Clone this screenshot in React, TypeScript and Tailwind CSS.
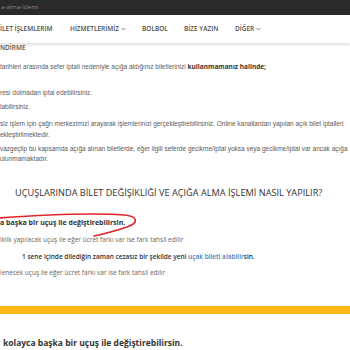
import React from "react";

function Chevron() {
	return (
		<svg width="5" height="4" viewBox="0 0 10 6" fill="none" className="ml-[2px]">
			<polyline points="1,1 5,5 9,1" stroke="#555" strokeWidth="1.4" />
		</svg>
	);
}

const navItems = [
	{ name: "İLET İŞLEMLERİM", width: "w-[70px]", menu: false },
	{ name: "HİZMETLERİMİZ", width: "w-[72px]", menu: true },
	{ name: "BOLBOL", width: "w-[42px]", menu: false },
	{ name: "BİZE YAZIN", width: "w-[51px]", menu: false },
	{ name: "DİĞER", width: "", menu: true },
];

export default function App() {
	return (
		<div className="relative h-[350px] w-[350px] overflow-hidden bg-white font-['Open_Sans',sans-serif]">
			<div className="h-[15px] bg-[#2a2a2a] pl-[1px] text-[6px] leading-[15px] text-[#8c8c8c]">a-alma-islemi</div>

			<nav className="relative z-10 flex h-[28px] items-center bg-white text-[6.5px] font-semibold text-[#4d4d4d] shadow-[0_2px_3px_rgba(0,0,0,0.12)]">
				{navItems.map((item) => (
					<span key={item.name} className={`flex items-center whitespace-nowrap ${item.width}`}>
						{item.name}
						{item.menu && <Chevron />}
					</span>
				))}
			</nav>

			<div className="flex flex-col whitespace-nowrap">
				<div className="h-[10px] text-[6.5px] font-semibold leading-[10px] text-[#555]">NDİRME</div>

				{/* upper paragraphs */}
				<div className="mt-[9px] font-['Liberation_Sans',Arial,sans-serif] text-[6.5px] leading-[10px] text-[#5a5a5a]">
					tarihleri arasında sefer iptali nedeniyle açığa aldığınız biletlerinizi{" "}
					<b className="font-['Open_Sans',sans-serif] font-bold text-[#333]">kullanmamanız halinde;</b>
				</div>
				<div className="mt-[16px] font-['Liberation_Sans',Arial,sans-serif] text-[6.5px] leading-[10px] text-[#5a5a5a]">
					resi dolmadan iptal edebilirsiniz.
				</div>
				<div className="mt-[4px] font-['Liberation_Sans',Arial,sans-serif] text-[6.5px] leading-[10px] text-[#5a5a5a]">
					labilirsiniz.
				</div>
				<div className="mt-[6px] font-['Liberation_Sans',Arial,sans-serif] text-[6.5px] leading-[11px] text-[#5a5a5a]">
					<div>siz işlem için çağrı merkezimizi arayarak işlemlerinizi gerçekleştirebilirsiniz. Online kanallardan yapılan açık bilet iptalleri</div>
					<div>ekleştirilmektedir.</div>
				</div>
				<div className="mt-[4px] font-['Liberation_Sans',Arial,sans-serif] text-[6.5px] leading-[10px] text-[#5a5a5a]">
					<div>vazgeçlip bu kapsamda açığa alınan biletlerde, eğer ilgili seferde gecikme/iptal yoksa veya gecikme/iptal var ancak açığa</div>
					<div>ulunmamaktadır.</div>
				</div>

				<h2 className="mt-[22px] h-[14px] pl-[15px] text-[9.2px] leading-[14px] text-[#333]">
					UÇUŞLARINDA BİLET DEĞİŞİKLİĞİ VE AÇIĞA ALMA İŞLEMİ NASIL YAPILIR?
				</h2>

				{/* bullets */}
				<div className="mt-[17px] text-[7px] leading-[12px] font-bold text-[#333]">a başka bir uçuş ile değiştirebilirsin.</div>
				<div className="mt-[5px] text-[6.5px] leading-[12px] text-[#666]">iklik yapılacak uçuş ile eğer ücret farkı var ise fark tahsil edilir</div>
				<div className="mt-[5px] text-[6.5px] leading-[12px] font-semibold">
					<span className="pl-[22px] text-[#333]">1 sene içinde dilediğin zaman cezasız bir şekilde yeni </span>
					<span className="text-[#4a7bb7]">uçak bileti alabilir</span>
					<span className="text-[#333]">sin.</span>
				</div>
				<div className="mt-[4px] text-[6.5px] leading-[12px] text-[#666]">lenecek uçuş ile eğer ücret farkı var ise fark tahsil edilir</div>

				<div className="mt-[27px] h-[8px] bg-[#fdb913]" />

				<div className="mt-[22px] pl-[3px] text-[8.5px] leading-[14px] font-bold text-[#333]">kolayca başka bir uçuş ile değiştirebilirsin.</div>
			</div>

			<svg className="pointer-events-none absolute left-0 top-0" width="350" height="350" fill="none">
				<path
					d="M -2 218 C 40 215, 95 213, 124 215 C 138 216, 139 223, 127 227 C 115 231, 104 234, 94 236"
					stroke="#e0242c"
					strokeWidth="1.7"
					strokeLinecap="round"
				/>
			</svg>
		</div>
	);
}
